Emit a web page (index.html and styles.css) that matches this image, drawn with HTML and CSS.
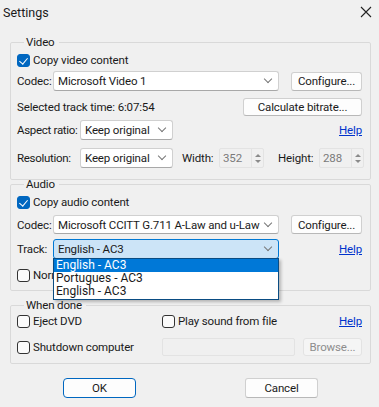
FILE: index.html
```html
<!DOCTYPE html>
<html>
<head>
    <title>Settings</title>
    <link rel="stylesheet" href="styles.css">
</head>
<body>
    <div class="window">
        <div class="titlebar">
            <span class="title">Settings</span>
            <svg class="close" width="12" height="12" viewBox="0 0 12 12">
                <path d="M1 1 L11 11 M11 1 L1 11" stroke="#222" stroke-width="1.1" fill="none"/>
            </svg>
        </div>

        <fieldset class="group group-video">
            <legend>Video</legend>
            <div class="row row-check">
                <label class="check"><span class="box checked"></span>Copy video content</label>
            </div>
            <div class="row row-codec">
                <span class="lbl">Codec:</span>
                <div class="combo combo-codec"><span>Microsoft Video 1</span><i class="chev"></i></div>
                <button class="btn btn-config">Configure...</button>
            </div>
            <div class="row row-time">
                <span class="lbl">Selected track time: 6:07:54</span>
                <button class="btn btn-calc">Calculate bitrate...</button>
            </div>
            <div class="row row-aspect">
                <span class="lbl lbl-wide">Aspect ratio:</span>
                <div class="combo combo-small"><span>Keep original</span><i class="chev"></i></div>
                <a class="help" href="#">Help</a>
            </div>
            <div class="row row-res">
                <span class="lbl lbl-wide">Resolution:</span>
                <div class="combo combo-small"><span>Keep original</span><i class="chev"></i></div>
                <span class="lbl lbl-w">Width:</span>
                <div class="spin"><span class="spin-val">352</span><span class="spin-btn"><i class="up"></i><i class="dn"></i></span></div>
                <span class="lbl lbl-h">Height:</span>
                <div class="spin"><span class="spin-val">288</span><span class="spin-btn"><i class="up"></i><i class="dn"></i></span></div>
            </div>
        </fieldset>

        <fieldset class="group group-audio">
            <legend>Audio</legend>
            <div class="row row-check">
                <label class="check"><span class="box checked"></span>Copy audio content</label>
            </div>
            <div class="row row-codec row-acodec">
                <span class="lbl">Codec:</span>
                <div class="combo combo-codec"><span>Microsoft CCITT G.711 A-Law and u-Law C</span><i class="chev"></i></div>
                <button class="btn btn-config">Configure...</button>
            </div>
            <div class="row row-track">
                <span class="lbl">Track:</span>
                <div class="combo combo-codec combo-active"><span>English - AC3</span><i class="chev"></i></div>
                <a class="help" href="#">Help</a>
                <ul class="dropdown">
                    <li class="sel">English - AC3</li>
                    <li>Portugues - AC3</li>
                    <li>English - AC3</li>
                </ul>
            </div>
            <div class="row row-norm">
                <label class="check"><span class="box"></span>Normalize audio</label>
            </div>
        </fieldset>

        <fieldset class="group group-done">
            <legend>When done</legend>
            <div class="row row-eject">
                <label class="check check-left"><span class="box"></span>Eject DVD</label>
                <label class="check"><span class="box"></span>Play sound from file</label>
                <a class="help" href="#">Help</a>
            </div>
            <div class="row row-shut">
                <label class="check check-left"><span class="box"></span>Shutdown computer</label>
                <div class="field-disabled"></div>
                <button class="btn btn-browse" disabled>Browse...</button>
            </div>
        </fieldset>

        <div class="footer">
            <button class="btn btn-ok">OK</button>
            <button class="btn btn-cancel">Cancel</button>
        </div>
    </div>
</body>
</html>
```

FILE: styles.css
```css
* {
    box-sizing: border-box;
}

body {
    margin: 0;
    background-color: #f0f0f0;
    font-family: Roboto, "Noto Sans", sans-serif;
    font-size: 11.5px;
    letter-spacing: -0.15px;
    color: #1a1a1a;
}

.window {
    width: 379px;
    height: 407px;
    overflow: hidden;
}

.titlebar {
    height: 25px;
    display: flex;
    align-items: center;
    justify-content: space-between;
    padding: 0 7px 1px 3px;
}

.title {
    font-size: 12.5px;
    letter-spacing: 0;
}

.group {
    border: 1px solid #d9d9d9;
    border-radius: 2px;
    padding: 0 8px 0 6px;
    margin: 0 8px 0 10px;
    min-width: 0;
}

.group legend {
    margin-left: 7px;
    padding: 0 4px 0 2px;
    line-height: 15px;
    height: 15px;
}

.group-video {
    margin-top: 10px;
    height: 145px;
}

.group-audio {
    margin-top: -3px;
    height: 114px;
}

.group-done {
    margin-top: 7px;
    height: 66px;
}

.row {
    display: flex;
    align-items: center;
    position: relative;
}

.row-check {
    height: 16px;
    margin-top: 2px;
}

.row-codec {
    height: 20px;
    margin-top: 3px;
}

.row-acodec {
    height: 19px;
    margin-top: 5px;
}

.row-time {
    height: 18px;
    margin-top: 7px;
    justify-content: space-between;
}

.row-aspect {
    height: 20px;
    margin-top: 4px;
}

.row-res {
    height: 20px;
    margin-top: 8px;
}

.row-track {
    height: 20px;
    margin-top: 5px;
}

.row-norm {
    height: 16px;
    margin-top: 8px;
}

.row-eject {
    height: 16px;
    margin-top: 0;
}

.row-shut {
    height: 18px;
    margin-top: 9px;
}

.lbl {
    white-space: nowrap;
    flex: none;
}

.row-codec .lbl,
.row-track .lbl {
    width: 36px;
}

.lbl-wide {
    width: 63px;
    letter-spacing: -0.3px;
}

.lbl-w {
    margin-left: 9px;
    width: 37px;
}

.lbl-h {
    margin-left: 14px;
    width: 41px;
}

.check {
    display: flex;
    align-items: center;
    white-space: nowrap;
}

.box {
    flex: none;
    width: 13px;
    height: 13px;
    border: 1px solid #333;
    border-radius: 3px;
    background: #fbfbfb;
    margin-right: 3px;
    position: relative;
}

.box.checked {
    background: #0067c0;
    border-color: #0067c0;
}

.box.checked::after {
    content: "";
    position: absolute;
    left: 3px;
    top: 1px;
    width: 4px;
    height: 7px;
    border: solid #fff;
    border-width: 0 1px 1px 0;
    transform: rotate(40deg);
}

.combo {
    flex: none;
    height: 100%;
    background: #fff;
    border: 1px solid #d0d0d0;
    border-bottom-color: #a8a8a8;
    border-radius: 3px;
    display: flex;
    align-items: center;
    justify-content: space-between;
    padding: 0 7px 0 4px;
    white-space: nowrap;
    overflow: hidden;
}

.combo span {
    overflow: hidden;
}

.combo-codec {
    width: 226px;
}

.combo-small {
    width: 93px;
}

.combo-active {
    background: #cce4f7;
    border-color: #0078d4;
}

.chev {
    flex: none;
    width: 6px;
    height: 6px;
    border: solid #777;
    border-width: 0 1px 1px 0;
    transform: rotate(45deg);
    margin: -4px 0 0 4px;
}

.btn {
    font-family: inherit;
    font-size: 11.5px;
    letter-spacing: -0.15px;
    color: #1a1a1a;
    background: #fdfdfd;
    border: 1px solid #d0d0d0;
    border-bottom-color: #b8b8b8;
    border-radius: 3px;
    padding: 0;
    height: 19px;
}

.btn-config {
    margin-left: auto;
    width: 71px;
}

.btn-calc {
    width: 119px;
    height: 18px;
}

.help {
    margin-left: auto;
    color: #0033cc;
    text-decoration: underline;
}

.spin {
    flex: none;
    width: 45px;
    height: 20px;
    display: flex;
    align-items: center;
    justify-content: space-between;
    border: 1px solid #e3e3e3;
    border-radius: 2px;
    padding-left: 3px;
    color: #7a7a7a;
}

.spin-btn {
    width: 12px;
    height: 18px;
    display: flex;
    flex-direction: column;
    justify-content: center;
    gap: 3px;
    align-items: center;
    border-left: 1px solid #e3e3e3;
}

.spin-btn i {
    width: 0;
    height: 0;
    border-left: 3px solid transparent;
    border-right: 3px solid transparent;
}

.spin-btn .up {
    border-bottom: 3px solid #8a8a8a;
}

.spin-btn .dn {
    border-top: 3px solid #8a8a8a;
}

.dropdown {
    position: absolute;
    left: 36px;
    top: 19px;
    width: 226px;
    margin: 0;
    padding: 0 0 1px;
    list-style: none;
    background: #fff;
    border: 1px solid #0a4c82;
    box-shadow: 2px 2px 3px rgba(0, 0, 0, 0.25);
    z-index: 5;
}

.dropdown li {
    height: 13px;
    line-height: 13px;
    padding-left: 2px;
    font-size: 12px;
    letter-spacing: 0;
}

.dropdown li.sel {
    background: #0078d7;
    color: #fff;
}

.check-left {
    width: 145px;
}

.field-disabled {
    width: 133px;
    height: 18px;
    border: 1px solid #e3e3e3;
    border-radius: 2px;
}

.btn-browse {
    margin-left: auto;
    width: 59px;
    height: 18px;
    color: #8d8d8d;
    background: #f5f5f5;
    border-color: #e3e3e3;
}

.footer {
    display: flex;
    justify-content: space-between;
    padding: 14px 61px 0 63px;
}

.btn-ok,
.btn-cancel {
    width: 73px;
    height: 20px;
}

.btn-ok {
    border: 1px solid #0067c0;
    border-radius: 4px;
}
```
